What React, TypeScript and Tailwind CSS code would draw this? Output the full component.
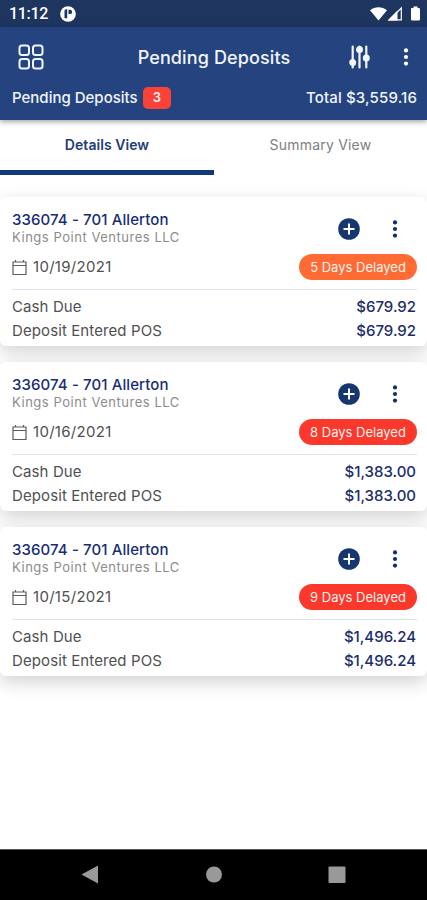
type Deposit = { date: string; delay: string; tone: string; amount: string };

const deposits: Deposit[] = [
  { date: "10/19/2021", delay: "5 Days Delayed", tone: "bg-[#ff6b35]", amount: "$679.92" },
  { date: "10/16/2021", delay: "8 Days Delayed", tone: "bg-[#fa382c]", amount: "$1,383.00" },
  { date: "10/15/2021", delay: "9 Days Delayed", tone: "bg-[#fa382c]", amount: "$1,496.24" },
];

function Dots({ className }: { className: string }) {
  return (
    <svg width="8" height="22" viewBox="0 0 8 22" fill="currentColor" className={className}>
      <circle cx="4" cy="4.4" r="2.1" />
      <circle cx="4" cy="11" r="2.1" />
      <circle cx="4" cy="17.6" r="2.1" />
    </svg>
  );
}

function StatusBar() {
  return (
    <div className="flex h-[27px] items-center bg-[#1d355f] pl-[9px] pr-[6px] pt-[1px] text-white">
      <span className="w-[51px] whitespace-nowrap font-['Roboto'] text-[16px] font-medium tracking-[-0.3px]">11:12</span>
      <svg width="16" height="16" viewBox="0 0 16 16">
        <circle cx="8" cy="8" r="7.8" fill="#fff" />
        <path d="M4.500 4.800q0-1.500 1.500-1.500h1.200v8.900H4.500zM8.500 3.700h1.600q2 0 2 2.200t-2 2.200H8.500z" fill="#1d355f" />
      </svg>
      <svg width="51" height="16" viewBox="0 0 51 16" fill="#fff" className="ml-auto">
        <path d="M0 4.200C4.800.1 12.200.1 17 4.200L8.500 14.500z" />
        <path d="M19.500 13.800 31.300 2v11.800z" fill="none" stroke="#fff" strokeWidth="1.200" />
        <path d="M17.500 14.500 27.500 4.500v10z" />
        <path d="M41.500 2h2V.5h4V2h1.300q1.200 0 1.200 1.200v10.100q0 1.200-1.200 1.200h-6.600q-1.200 0-1.200-1.200V3.200Q41 2 41.500 2z" />
      </svg>
    </div>
  );
}

function Header() {
  return (
    <header className="relative z-10 h-[93px] bg-[#25447f] text-[#f2f5fb] shadow-[0_2px_5px_rgba(0,0,0,0.35)]">
      <div className="grid h-[60px] grid-cols-[1fr_auto_1fr] items-center pl-[18px] pr-[17px]">
        <svg width="26" height="26" viewBox="0 0 26 26" fill="none" stroke="currentColor" strokeWidth="2">
          <rect x="1.500" y="1.500" width="9.500" height="9.500" rx="2.500" />
          <rect x="15" y="1.500" width="9.500" height="9.500" rx="2.500" />
          <rect x="1.500" y="15" width="9.500" height="9.500" rx="2.500" />
          <rect x="15" y="15" width="9.500" height="9.500" rx="2.500" />
        </svg>
        <h1 className="whitespace-nowrap text-[18px] font-medium tracking-[0.12px]">Pending Deposits</h1>
        <div className="flex items-center justify-end gap-[31px]">
          <svg width="22" height="24" viewBox="0 0 22 24" fill="currentColor" stroke="currentColor" strokeWidth="2.200" strokeLinecap="round">
            <path d="M3.700 1.500v21M10.500 1.500v21M17.300 1.500v21" />
            <circle cx="3.700" cy="17.500" r="2.400" />
            <circle cx="10.500" cy="4.500" r="2.400" />
            <circle cx="17.300" cy="13" r="2.400" />
          </svg>
          <Dots className="text-white" />
        </div>
      </div>
      <div className="flex h-[22px] items-center justify-between pl-3 pr-[10px] text-[15px] font-medium">
        <div className="flex items-center gap-[6px]">
          <span className="w-[125px] whitespace-nowrap">Pending Deposits</span>
          <span className="flex h-[22px] w-[28px] items-center justify-center rounded-[5px] bg-[#fa4236] text-[13px] font-semibold">3</span>
        </div>
        <span className="tracking-[0.15px]">Total $3,559.16</span>
      </div>
    </header>
  );
}

function Tabs() {
  return (
    <nav className="flex h-[55px] text-[14px]">
      <button className="w-[214px] border-b-[5px] border-[#103778] pb-[1px] font-semibold tracking-[0.06px] text-[#233b79]">Details View</button>
      <button className="flex-1 border-b-[5px] border-transparent pb-[1px] tracking-[0.2px] text-[#808080]">Summary View</button>
    </nav>
  );
}

function DepositCard({ deposit }: { deposit: Deposit }) {
  return (
    <article className="relative h-[149px] rounded-[6px] bg-white pl-3 pr-[10px] pt-3 shadow-[0_6px_18px_rgba(0,0,0,0.18)]">
      <div className="flex justify-between">
        <div className="pt-px">
          <h2 className="text-[15px] font-medium leading-[19px] tracking-[0.1px] text-[#182d75]">336074 - 701 Allerton</h2>
          <p className="text-[13px] leading-4 tracking-[0.53px] text-[#8c8c8c]">Kings Point Ventures LLC</p>
        </div>
        <div className="mt-[9px] flex h-[22px] items-center gap-[31px] pr-[18px] text-[#162d6c]">
          <svg width="22" height="22" viewBox="0 0 22 22">
            <circle cx="11" cy="11" r="10.800" fill="#15366f" />
            <path d="M11 5.500v11M5.500 11h11" stroke="#fff" strokeWidth="2" />
          </svg>
          <Dots className="text-[#162d6c]" />
        </div>
      </div>
      <div className="mt-[9px] flex h-[26px] items-center justify-between">
        <div className="flex items-center text-[15px] text-[#505050]">
          <svg width="15" height="17" viewBox="0 0 15 17" fill="none" stroke="#5c5c5c" strokeWidth="1.200">
            <path d="M1 3h13v12.500H1zM1 6.500h13M3.500 1v2M11.500 1v2" />
          </svg>
          <span className="ml-[6px] tracking-[0.3px]">{deposit.date}</span>
        </div>
        <span className={"flex h-[26px] w-[118px] items-center justify-center whitespace-nowrap rounded-full pt-px text-[13px] text-[#fff3ed] " + deposit.tone}>
          {deposit.delay}
        </span>
      </div>
      <div className="mb-[5px] mt-[9px] h-px bg-[#dce3f3]" />
      {["Cash Due", "Deposit Entered POS"].map((label) => (
        <div key={label} className="flex h-6 items-center justify-between pr-px text-[15px]">
          <span className="tracking-[0.1px] text-[#505050]">{label}</span>
          <span className="font-medium text-[#1c2d6b]">{deposit.amount}</span>
        </div>
      ))}
    </article>
  );
}

export default function App() {
  return (
    <div className="flex h-[900px] w-[427px] flex-col overflow-hidden bg-white font-['Inter',sans-serif]">
      <StatusBar />
      <Header />
      <Tabs />
      <main className="flex flex-1 flex-col gap-4 pt-[22px]">
        {deposits.map((d) => (
          <DepositCard key={d.date} deposit={d} />
        ))}
      </main>
      <footer className="h-[51px] border-t border-[#555] bg-black">
        <svg width="427" height="50" viewBox="0 0 427 50" fill="#999">
          <path d="M81.500 24.500 98 15.500v18z" />
          <circle cx="214" cy="24.500" r="8" />
          <rect x="328.500" y="16.500" width="17" height="16.500" rx="1" />
        </svg>
      </footer>
    </div>
  );
}
